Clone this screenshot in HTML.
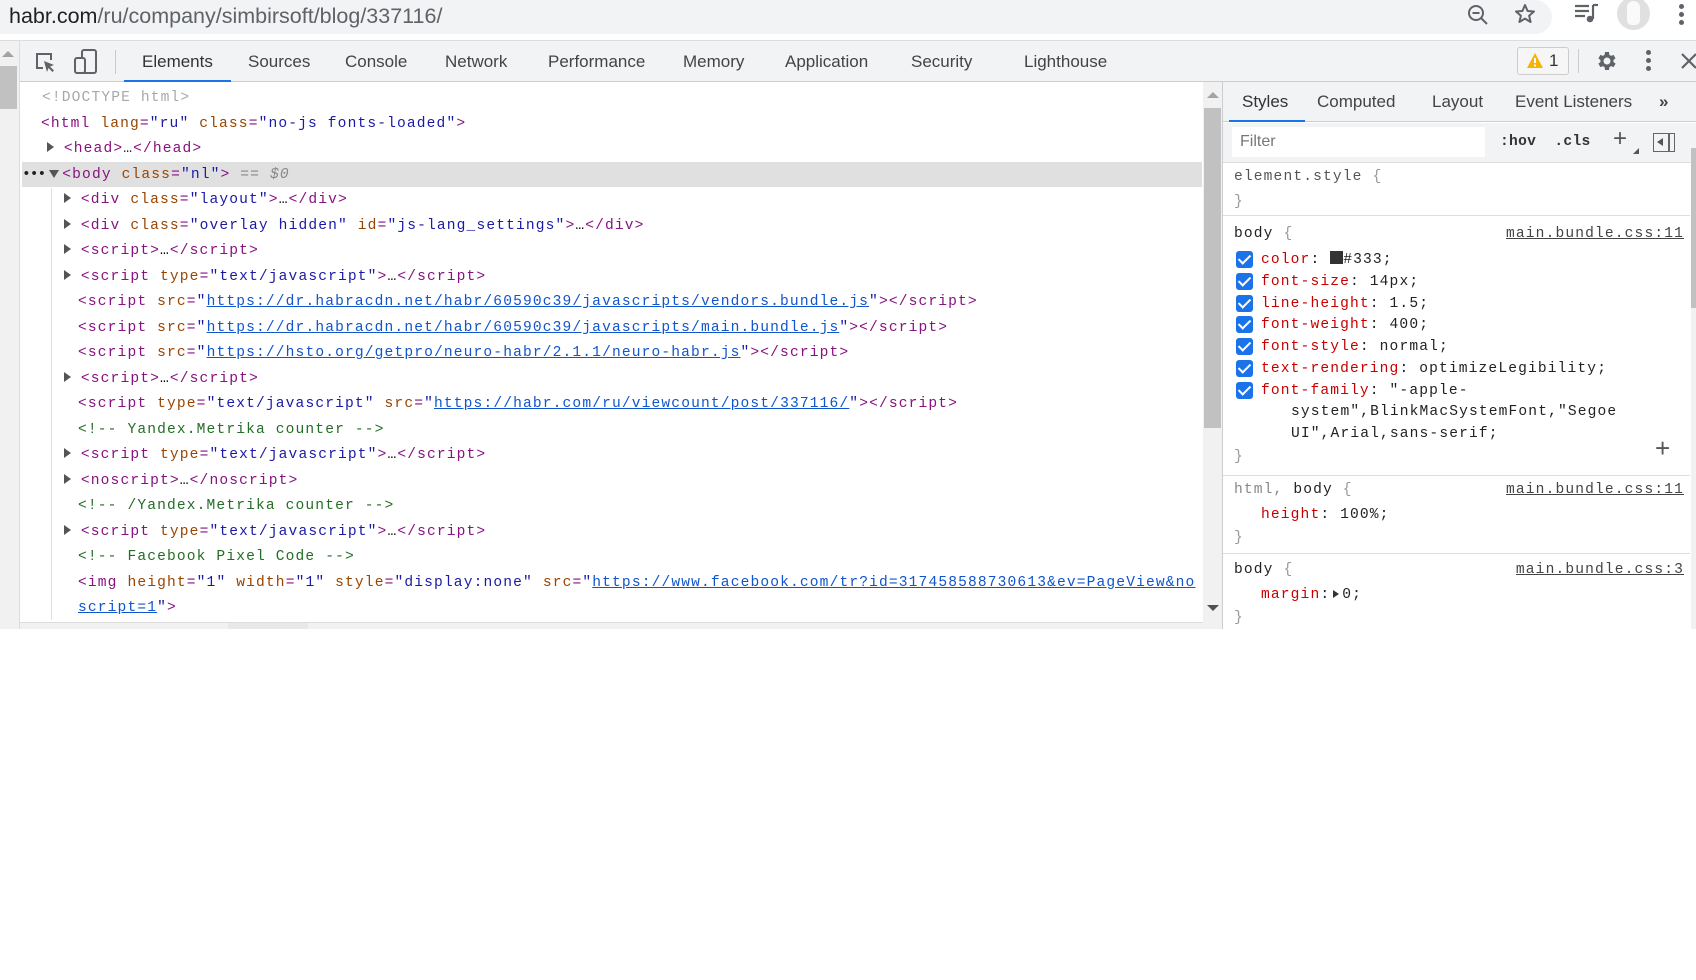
<!DOCTYPE html>
<html><head><meta charset="utf-8">
<style>
*{margin:0;padding:0;box-sizing:border-box}
body{width:1696px;height:629px;overflow:hidden;background:#fff;position:relative;font-family:"Liberation Sans",sans-serif}
.abs{position:absolute}
.m{font-family:"Liberation Mono",monospace;font-size:14.6px;letter-spacing:1.13px;white-space:pre;line-height:20px}
.t{color:#881280}.a{color:#994500}.v{color:#1a1aa6}.l{color:#1155cc;text-decoration:underline}.c{color:#236e25}.g{color:#a8a8a8}.k{color:#222}
.row{position:absolute;height:20px}
.tri{display:inline-block;width:0;height:0;border-top:5px solid transparent;border-bottom:5px solid transparent;border-left:7px solid #555;vertical-align:middle;margin-top:-3px}
.tab{position:absolute;top:52px;font-size:17px;color:#444}
.stab{position:absolute;top:92px;font-size:17px;color:#444}
.p{color:#c80000}
.cb{position:absolute;width:17px;height:17px;background:#1a73e8;border-radius:3px}
.cb:after{content:"";position:absolute;left:5px;top:1px;width:5px;height:10px;border:solid #fff;border-width:0 2.5px 2.5px 0;transform:rotate(45deg)}
.src{position:absolute;right:12px;color:#444;text-decoration:underline}
</style></head><body>
<!-- URL bar -->
<div class="abs" style="left:0;top:0;width:1552px;height:34px;background:#f1f3f4;border-radius:0 17px 17px 0"></div>
<div class="abs" style="left:0;top:34px;width:1696px;height:7px;background:#fff"></div>
<div class="abs" style="left:9px;top:4px;font-size:21.5px;color:#5f6368;white-space:pre"><span style="color:#202124">habr.com</span>/ru/company/simbirsoft/blog/337116/</div>
<svg class="abs" style="left:1466px;top:3px" width="24" height="24" viewBox="0 0 24 24"><circle cx="10" cy="10" r="7" fill="none" stroke="#5f6368" stroke-width="2"/><path d="M15 15l6 6M6.5 10h7" stroke="#5f6368" stroke-width="2"/></svg>
<svg class="abs" style="left:1513px;top:2px" width="24" height="24" viewBox="0 0 24 24"><path d="M12 3l2.6 6 6.4.5-4.9 4.2 1.5 6.3L12 16.6 6.4 20l1.5-6.3L3 9.5 9.4 9z" fill="none" stroke="#5f6368" stroke-width="2" stroke-linejoin="round"/></svg>
<svg class="abs" style="left:1573px;top:3px" width="26" height="22" viewBox="0 0 26 22"><path d="M2 3h14M2 8h14M2 13h10" stroke="#5f6368" stroke-width="2.2"/><path d="M20 2v14" stroke="#5f6368" stroke-width="2.2"/><circle cx="17" cy="16" r="3.3" fill="#5f6368"/><path d="M20 2h5" stroke="#5f6368" stroke-width="2.2"/></svg>
<div class="abs" style="left:1617px;top:-3px;width:33px;height:33px;border-radius:50%;background:#e0e0e0"></div>
<div class="abs" style="left:1627px;top:1px;width:13px;height:24px;border-radius:7px 7px 5px 5px;background:#fafafa"></div>
<div class="abs" style="left:1679px;top:4px;width:5px;height:5px;border-radius:50%;background:#5f6368;box-shadow:0 8px 0 #5f6368,0 16px 0 #5f6368"></div>
<div class="abs" style="left:0;top:40px;width:1696px;height:1px;background:#dadce0"></div>
<!-- page scrollbar -->
<div class="abs" style="left:0;top:41px;width:20px;height:588px;background:#f1f1f1"></div>
<div class="abs" style="left:2px;top:51px;width:0;height:0;border-left:6px solid transparent;border-right:6px solid transparent;border-bottom:6px solid #a3a3a3"></div>
<div class="abs" style="left:0;top:66px;width:17px;height:43px;background:#c1c1c1"></div>
<div class="abs" style="left:19px;top:41px;width:1px;height:588px;background:#dadce0"></div>
<!-- devtools toolbar -->
<div class="abs" style="left:20px;top:41px;width:1676px;height:41px;background:#f1f3f4;border-bottom:1px solid #cbcdd1"></div>
<svg class="abs" style="left:35px;top:52px" width="22" height="22" viewBox="0 0 22 22"><path d="M8 16H2V2h14v6" fill="none" stroke="#5f6368" stroke-width="2"/><path d="M9 9l10 4-4 1.5 4 4-1.5 1.5-4-4L12 20z" fill="#5f6368"/></svg>
<svg class="abs" style="left:74px;top:49px" width="24" height="26" viewBox="0 0 24 26"><rect x="8" y="1" width="14" height="23" rx="2" fill="none" stroke="#5f6368" stroke-width="2"/><rect x="1" y="9" width="10" height="15" rx="2" fill="#f1f3f4" stroke="#5f6368" stroke-width="2"/></svg>
<div class="abs" style="left:115px;top:50px;width:1px;height:24px;background:#ccc"></div>
<div class="tab" style="left:142px;color:#333">Elements</div>
<div class="abs" style="left:124px;top:80px;width:107px;height:2px;background:#1a73e8"></div>
<div class="tab" style="left:248px">Sources</div>
<div class="tab" style="left:345px">Console</div>
<div class="tab" style="left:445px">Network</div>
<div class="tab" style="left:548px">Performance</div>
<div class="tab" style="left:683px">Memory</div>
<div class="tab" style="left:785px">Application</div>
<div class="tab" style="left:911px">Security</div>
<div class="tab" style="left:1024px">Lighthouse</div>
<div class="abs" style="left:1517px;top:47px;width:52px;height:28px;border:1px solid #ccc;border-radius:3px;background:#f6f6f6"></div>
<svg class="abs" style="left:1526px;top:52px" width="18" height="17" viewBox="0 0 18 17"><path d="M9 1L17 16H1z" fill="#f4b400"/><path d="M9 6v5" stroke="#fff" stroke-width="2"/><circle cx="9" cy="13.5" r="1.1" fill="#fff"/></svg>
<div class="abs" style="left:1549px;top:51px;font-size:17px;color:#333">1</div>
<div class="abs" style="left:1578px;top:49px;width:1px;height:24px;background:#ccc"></div>
<svg class="abs" style="left:1594px;top:49px" width="24" height="24" viewBox="0 0 24 24"><path fill="#5f6368" d="M19.4 13a7.5 7.5 0 0 0 0-2l2.1-1.6-2-3.5-2.5 1a7 7 0 0 0-1.7-1L15 3h-4l-.4 2.9a7 7 0 0 0-1.7 1l-2.5-1-2 3.5L6.5 11a7.5 7.5 0 0 0 0 2l-2.1 1.6 2 3.5 2.5-1a7 7 0 0 0 1.7 1L11 21h4l.4-2.9a7 7 0 0 0 1.7-1l2.5 1 2-3.5zM13 15.5a3.5 3.5 0 1 1 0-7 3.5 3.5 0 0 1 0 7z"/></svg>
<div class="abs" style="left:1646px;top:50px;width:5px;height:5px;border-radius:50%;background:#5f6368;box-shadow:0 8px 0 #5f6368,0 16px 0 #5f6368"></div>
<svg class="abs" style="left:1680px;top:52px" width="16" height="18" viewBox="0 0 16 18"><path d="M2 2l14 14M16 2L2 16" stroke="#5f6368" stroke-width="2.2"/></svg>
<!-- left pane -->
<div class="abs" style="left:22px;top:162px;width:1180px;height:25px;background:#e0e0e0"></div>
<div class="abs" style="left:51px;top:188px;width:1px;height:432px;background:#d6e2f5"></div>
<div class="m">
<div class="row g" style="left:42px;top:88px">&lt;!DOCTYPE html&gt;</div>
<div class="row" style="left:41px;top:114px"><span class="t">&lt;html </span><span class="a">lang</span><span class="t">=</span><span class="v">"ru"</span> <span class="a">class</span><span class="t">=</span><span class="v">"no-js fonts-loaded"</span><span class="t">&gt;</span></div>
<div class="row" style="left:47px;top:139px"><span class="tri"></span> <span class="t">&lt;head&gt;</span><span class="k">…</span><span class="t">&lt;/head&gt;</span></div>
<div class="row" style="left:22px;top:165px"><span class="k" style="letter-spacing:-1px">•••</span><span class="tri" style="border-left:5px solid transparent;border-right:5px solid transparent;border-top:8px solid #555;border-bottom:0;margin:0 3px 0 4px"></span><span class="t">&lt;body </span><span class="a">class</span><span class="t">=</span><span class="v">"nl"</span><span class="t">&gt;</span> <span class="g" style="font-style:italic;color:#888">== $0</span></div>
<div class="row" style="left:64px;top:190px"><span class="tri"></span> <span class="t">&lt;div </span><span class="a">class</span><span class="t">=</span><span class="v">"layout"</span><span class="t">&gt;</span>…<span class="t">&lt;/div&gt;</span></div>
<div class="row" style="left:64px;top:216px"><span class="tri"></span> <span class="t">&lt;div </span><span class="a">class</span><span class="t">=</span><span class="v">"overlay hidden"</span> <span class="a">id</span><span class="t">=</span><span class="v">"js-lang_settings"</span><span class="t">&gt;</span>…<span class="t">&lt;/div&gt;</span></div>
<div class="row" style="left:64px;top:241px"><span class="tri"></span> <span class="t">&lt;script&gt;</span>…<span class="t">&lt;/script&gt;</span></div>
<div class="row" style="left:64px;top:267px"><span class="tri"></span> <span class="t">&lt;script </span><span class="a">type</span><span class="t">=</span><span class="v">"text/javascript"</span><span class="t">&gt;</span>…<span class="t">&lt;/script&gt;</span></div>
<div class="row" style="left:78px;top:292px"><span class="t">&lt;script </span><span class="a">src</span><span class="t">=</span><span class="v">"</span><span class="l">https://dr.habracdn.net/habr/60590c39/javascripts/vendors.bundle.js</span><span class="v">"</span><span class="t">&gt;&lt;/script&gt;</span></div>
<div class="row" style="left:78px;top:318px"><span class="t">&lt;script </span><span class="a">src</span><span class="t">=</span><span class="v">"</span><span class="l">https://dr.habracdn.net/habr/60590c39/javascripts/main.bundle.js</span><span class="v">"</span><span class="t">&gt;&lt;/script&gt;</span></div>
<div class="row" style="left:78px;top:343px"><span class="t">&lt;script </span><span class="a">src</span><span class="t">=</span><span class="v">"</span><span class="l">https://hsto.org/getpro/neuro-habr/2.1.1/neuro-habr.js</span><span class="v">"</span><span class="t">&gt;&lt;/script&gt;</span></div>
<div class="row" style="left:64px;top:369px"><span class="tri"></span> <span class="t">&lt;script&gt;</span>…<span class="t">&lt;/script&gt;</span></div>
<div class="row" style="left:78px;top:394px"><span class="t">&lt;script </span><span class="a">type</span><span class="t">=</span><span class="v">"text/javascript"</span> <span class="a">src</span><span class="t">=</span><span class="v">"</span><span class="l">https://habr.com/ru/viewcount/post/337116/</span><span class="v">"</span><span class="t">&gt;&lt;/script&gt;</span></div>
<div class="row c" style="left:78px;top:420px">&lt;!-- Yandex.Metrika counter --&gt;</div>
<div class="row" style="left:64px;top:445px"><span class="tri"></span> <span class="t">&lt;script </span><span class="a">type</span><span class="t">=</span><span class="v">"text/javascript"</span><span class="t">&gt;</span>…<span class="t">&lt;/script&gt;</span></div>
<div class="row" style="left:64px;top:471px"><span class="tri"></span> <span class="t">&lt;noscript&gt;</span>…<span class="t">&lt;/noscript&gt;</span></div>
<div class="row c" style="left:78px;top:496px">&lt;!-- /Yandex.Metrika counter --&gt;</div>
<div class="row" style="left:64px;top:522px"><span class="tri"></span> <span class="t">&lt;script </span><span class="a">type</span><span class="t">=</span><span class="v">"text/javascript"</span><span class="t">&gt;</span>…<span class="t">&lt;/script&gt;</span></div>
<div class="row c" style="left:78px;top:547px">&lt;!-- Facebook Pixel Code --&gt;</div>
<div class="row" style="left:78px;top:573px"><span class="t">&lt;img </span><span class="a">height</span><span class="t">=</span><span class="v">"1"</span> <span class="a">width</span><span class="t">=</span><span class="v">"1"</span> <span class="a">style</span><span class="t">=</span><span class="v">"display:none"</span> <span class="a">src</span><span class="t">=</span><span class="v">"</span><span class="l">https://www.facebook.com/tr?id=317458588730613&amp;ev=PageView&amp;no</span></div>
<div class="row" style="left:78px;top:598px"><span class="l">script=1</span><span class="v">"</span><span class="t">&gt;</span></div>
</div>
<!-- bottom scrollbar -->
<div class="abs" style="left:20px;top:622px;width:1183px;height:7px;background:#f1f1f1;border-top:1px solid #ddd"></div>
<div class="abs" style="left:228px;top:623px;width:80px;height:6px;background:#e8e8e8"></div>
<!-- left pane vertical scrollbar -->
<div class="abs" style="left:1203px;top:82px;width:19px;height:547px;background:#f1f1f1"></div>
<div class="abs" style="left:1207px;top:92px;width:0;height:0;border-left:6px solid transparent;border-right:6px solid transparent;border-bottom:6px solid #a3a3a3"></div>
<div class="abs" style="left:1204px;top:108px;width:17px;height:320px;background:#c1c1c1"></div>
<div class="abs" style="left:1207px;top:605px;width:0;height:0;border-left:6px solid transparent;border-right:6px solid transparent;border-top:6px solid #505050"></div>
<div class="abs" style="left:1222px;top:82px;width:1px;height:547px;background:#cbcdd1"></div>
<!-- styles pane -->
<div class="abs" style="left:1223px;top:82px;width:473px;height:40px;background:#f1f3f4;border-bottom:1px solid #cbcdd1"></div>
<div class="stab" style="left:1242px;color:#333">Styles</div>
<div class="abs" style="left:1229px;top:120px;width:76px;height:2px;background:#1a73e8"></div>
<div class="stab" style="left:1317px">Computed</div>
<div class="stab" style="left:1432px">Layout</div>
<div class="stab" style="left:1515px">Event Listeners</div>
<div class="stab" style="left:1659px;font-weight:bold">»</div>
<div class="abs" style="left:1223px;top:123px;width:473px;height:39px;background:#f1f3f4"></div>
<div class="abs" style="left:1232px;top:127px;width:253px;height:30px;background:#fff"></div>
<div class="abs" style="left:1240px;top:133px;font-size:16px;color:#777">Filter</div>
<div class="abs m" style="left:1500px;top:132px;font-weight:bold;color:#333;letter-spacing:0.3px">:hov  .cls</div>
<div class="abs" style="left:1613px;top:125px;font-size:24px;color:#555">+</div>
<div class="abs" style="left:1633px;top:148px;width:0;height:0;border-left:6px solid transparent;border-bottom:6px solid #555"></div>
<div class="abs" style="left:1653px;top:133px;width:22px;height:19px;border:1.5px solid #666"></div>
<div class="abs" style="left:1668px;top:133px;width:1.5px;height:19px;background:#666"></div>
<div class="abs" style="left:1657px;top:138px;width:0;height:0;border-top:4.5px solid transparent;border-bottom:4.5px solid transparent;border-right:6px solid #555"></div>
<div class="abs" style="left:1223px;top:162px;width:473px;height:1px;background:#ddd"></div>
<div class="abs" style="left:1691px;top:148px;width:5px;height:481px;background:#f1f1f1"></div>
<div class="abs" style="left:1691px;top:148px;width:5px;height:160px;background:#c1c1c1"></div>
<div class="m">
<div class="row" style="left:1234px;top:167px;color:#555">element.style <span style="color:#999">{</span></div>
<div class="row" style="left:1234px;top:192px;color:#999">}</div>
<div class="abs" style="left:1223px;top:215px;width:467px;height:1px;background:#ddd"></div>
<div class="row k" style="left:1234px;top:224px">body <span style="color:#999">{</span></div>
<div class="src" style="top:224px;right:12px">main.bundle.css:11</div>
<div class="row" style="left:1261px;top:250px"><span class="p">color</span><span class="k">: </span><span style="display:inline-block;width:13px;height:13px;background:#333;vertical-align:-1px"></span><span class="k">#333;</span></div>
<div class="row" style="left:1261px;top:272px"><span class="p">font-size</span><span class="k">: 14px;</span></div>
<div class="row" style="left:1261px;top:294px"><span class="p">line-height</span><span class="k">: 1.5;</span></div>
<div class="row" style="left:1261px;top:315px"><span class="p">font-weight</span><span class="k">: 400;</span></div>
<div class="row" style="left:1261px;top:337px"><span class="p">font-style</span><span class="k">: normal;</span></div>
<div class="row" style="left:1261px;top:359px"><span class="p">text-rendering</span><span class="k">: optimizeLegibility;</span></div>
<div class="row" style="left:1261px;top:381px"><span class="p">font-family</span><span class="k">: "-apple-</span></div>
<div class="row k" style="left:1291px;top:402px">system",BlinkMacSystemFont,"Segoe</div>
<div class="row k" style="left:1291px;top:424px">UI",Arial,sans-serif;</div>
<div class="row" style="left:1234px;top:447px;color:#999">}</div>
<div class="abs" style="left:1655px;top:438px;font-size:26px;color:#555;font-family:'Liberation Sans'">+</div>
<div class="abs" style="left:1223px;top:475px;width:467px;height:1px;background:#ddd"></div>
<div class="row" style="left:1234px;top:480px;color:#888">html, <span class="k">body</span> <span style="color:#999">{</span></div>
<div class="src" style="top:480px;right:12px">main.bundle.css:11</div>
<div class="row" style="left:1261px;top:505px"><span class="p">height</span><span class="k">: 100%;</span></div>
<div class="row" style="left:1234px;top:528px;color:#999">}</div>
<div class="abs" style="left:1223px;top:553px;width:467px;height:1px;background:#ddd"></div>
<div class="row k" style="left:1234px;top:560px">body <span style="color:#999">{</span></div>
<div class="src" style="top:560px;right:12px">main.bundle.css:3</div>
<div class="row" style="left:1261px;top:585px"><span class="p">margin</span><span class="k">:<span class="tri" style="border-left-color:#333;border-top-width:4px;border-bottom-width:4px;border-left-width:6px;margin:0 3px"></span>0;</span></div>
<div class="row" style="left:1234px;top:608px;color:#999">}</div>
</div>
<div class="cb" style="left:1236px;top:251px"></div>
<div class="cb" style="left:1236px;top:273px"></div>
<div class="cb" style="left:1236px;top:295px"></div>
<div class="cb" style="left:1236px;top:316px"></div>
<div class="cb" style="left:1236px;top:338px"></div>
<div class="cb" style="left:1236px;top:360px"></div>
<div class="cb" style="left:1236px;top:382px"></div>
</body></html>
